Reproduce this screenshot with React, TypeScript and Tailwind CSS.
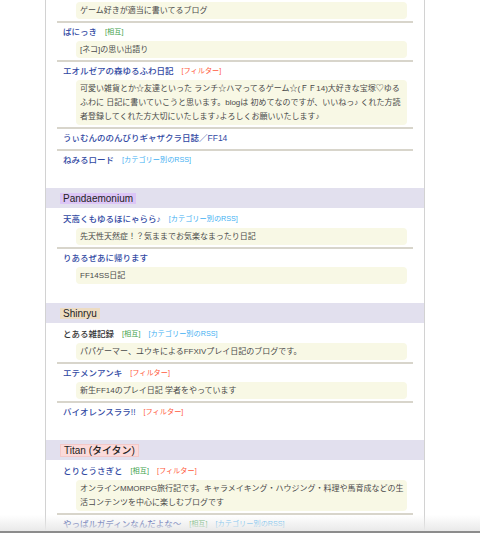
type Tag = 'mutual' | 'filter' | 'rss'

type Entry = {
  title?: string
  tags?: Tag[]
  desc?: string
  dark?: boolean
}

type Group = {
  name?: string
  label?: string
  entries: Entry[]
}

const TAGS: Record<Tag, { text: string; cls: string }> = {
  mutual: { text: '[相互]', cls: 'text-[#3fa34d]' },
  filter: { text: '[フィルター]', cls: 'text-[#ff5a3c]' },
  rss: { text: '[カテゴリー別のRSS]', cls: 'text-[#3fb0f2]' },
}

const GROUPS: Group[] = [
  {
    entries: [
      { desc: 'ゲーム好きが適当に書いてるブログ' },
      { title: 'ぱにっき', tags: ['mutual'], desc: '[ネコ]の思い出語り' },
      {
        title: 'エオルゼアの森ゆるふわ日記',
        tags: ['filter'],
        desc: '可愛い雑貨とか☆友達といった ランチ☆ハマってるゲーム☆(ＦＦ14)大好きな宝塚♡ゆるふわに 日記に書いていこうと思います。blogは 初めてなのですが、いいねっ♪ くれた方読者登録してくれた方大切にいたします♪よろしくお願いいたします♪',
      },
      { title: 'うぃむんののんびりギャザクラ日誌／FF14' },
      { title: 'ねみるロード', tags: ['rss'] },
    ],
  },
  {
    name: 'Pandaemonium',
    label: 'bg-[#dcc6f6]',
    entries: [
      { title: '天高くもゆるほにゃらら♪', tags: ['rss'], desc: '先天性天然症！？気ままでお気楽なまったり日記' },
      { title: 'りあるぜあに帰ります', desc: 'FF14SS日記' },
    ],
  },
  {
    name: 'Shinryu',
    label: 'bg-[#eddcc2]',
    entries: [
      { title: 'とある雑記録', tags: ['mutual', 'rss'], desc: 'パパゲーマー、ユウキによるFFXIVプレイ日記のブログです。', dark: true },
      { title: 'エテメンアンキ', tags: ['filter'], desc: '新生FF14のプレイ日記 学者をやっています' },
      { title: 'バイオレンスララ!!', tags: ['filter'] },
    ],
  },
  {
    name: 'Titan (タイタン)',
    label: 'bg-[#fbdada] border border-[#f3c9c9]',
    entries: [
      {
        title: 'とりとうさぎと',
        tags: ['mutual', 'filter'],
        desc: 'オンラインMMORPG旅行記です。キャラメイキング・ハウジング・料理や馬育成などの生活コンテンツを中心に楽しむブログです',
      },
      { title: 'やっぱルガディンなんだよな〜', tags: ['mutual', 'rss'] },
    ],
  },
]

function EntryRow({ entry, last }: { entry: Entry; last: boolean }) {
  return (
    <div className={`mx-[11px] pb-[2px] ${last ? '' : 'border-b-2 border-[#d8d5cb]'} ${entry.title ? '' : 'pt-[2px]'}`}>
      {entry.title && (
        <div className="flex h-[18px] items-center gap-[8px] pl-[6px]">
          <span className={`text-[8.5px] font-medium ${entry.dark ? 'text-[#333]' : 'text-[#3249a3]'}`}>{entry.title}</span>
          {entry.tags?.map((t) => (
            <span key={t} className={`text-[7.2px] ${TAGS[t].cls}`}>
              {TAGS[t].text}
            </span>
          ))}
        </div>
      )}
      {entry.desc && (
        <div className="ml-[19px] mr-[6px] rounded-[4px] bg-[#f8f8e5] py-[1.5px] pl-[4px] pr-[1px] text-[8px] leading-[14px] text-[#4a4a4a]">
          {entry.desc}
        </div>
      )}
    </div>
  )
}

export default function App() {
  return (
    <div
      className="relative h-[533px] w-[480px] overflow-hidden bg-white"
      style={{ fontFamily: '"Liberation Sans", "Noto Sans CJK JP", sans-serif' }}
    >
      <div className="ml-[45px] h-full w-[380px] border-x border-[#d2d2d2]">
        {GROUPS.map((g, gi) => (
          <div key={gi}>
            {g.name && (
              <div className="mb-[2px] flex h-[20px] items-center bg-[#e2e0ee] pl-[14px]">
                <span className={`px-[3px] text-[10px] leading-[11px] font-medium text-[#222] ${g.label}`}>{g.name}</span>
              </div>
            )}
            <div className="mb-[17px]">
              {g.entries.map((e, i) => (
                <EntryRow key={i} entry={e} last={i === g.entries.length - 1} />
              ))}
            </div>
          </div>
        ))}
      </div>
      <div className="pointer-events-none absolute inset-x-0 bottom-0 h-[18px] border-b-2 border-[#8c8c8c] bg-gradient-to-b from-white/0 to-[#e9e9e9]" />
    </div>
  )
}
